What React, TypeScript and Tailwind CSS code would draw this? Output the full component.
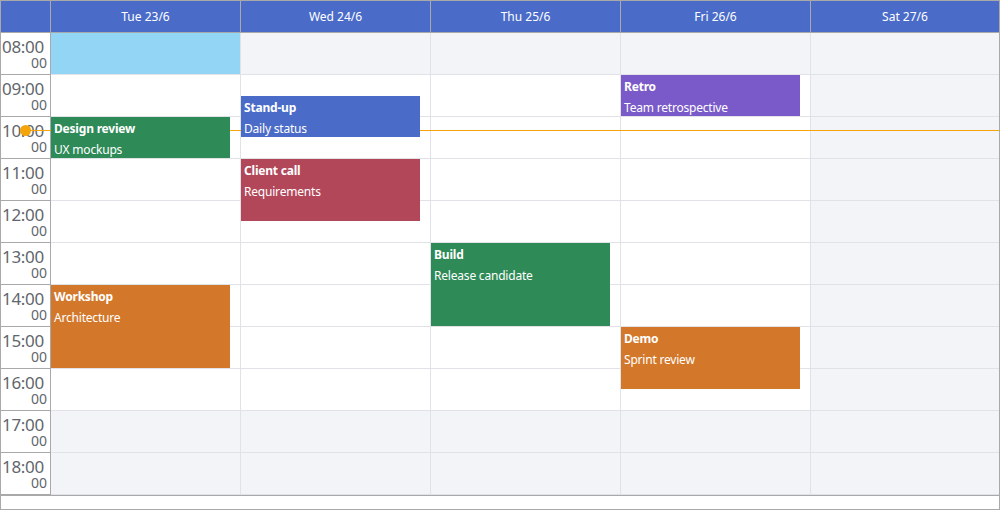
import React from 'react';

type Ev = { day: number; start: number; end: number; title?: string; note?: string; color: string; full?: boolean };

const days = ['Tue 23/6', 'Wed 24/6', 'Thu 25/6', 'Fri 26/6', 'Sat 27/6'];
const hours = [8, 9, 10, 11, 12, 13, 14, 15, 16, 17, 18];
const ROW = 42;

const events: Ev[] = [
    { day: 0, start: 8, end: 9, color: 'bg-[#93d5f5]', full: true },
    { day: 0, start: 10, end: 11, title: 'Design review', note: 'UX mockups', color: 'bg-[#2e8a57]' },
    { day: 0, start: 14, end: 16, title: 'Workshop', note: 'Architecture', color: 'bg-[#d3782b]' },
    { day: 1, start: 9.5, end: 10.5, title: 'Stand-up', note: 'Daily status', color: 'bg-[#4a6cc8]' },
    { day: 1, start: 11, end: 12.5, title: 'Client call', note: 'Requirements', color: 'bg-[#b2475a]' },
    { day: 2, start: 13, end: 15, title: 'Build', note: 'Release candidate', color: 'bg-[#2e8a57]' },
    { day: 3, start: 9, end: 10, title: 'Retro', note: 'Team retrospective', color: 'bg-[#7a5ac8]' },
    { day: 3, start: 15, end: 16.5, title: 'Demo', note: 'Sprint review', color: 'bg-[#d3782b]' },
];

// off hours and weekend get the grey cell
const isOff = (day: number, h: number) => day === 4 || h < 9 || h > 16;

function DayColumn({ index }: { index: number }) {
    const last = index === days.length - 1;
    return (
        <div className={last ? 'relative flex-1' : 'relative w-[190px] border-r border-[#e0e2e7]'}>
            {hours.map((h) => (
                <div key={h} className={`h-[42px] border-b border-[#e0e2e7] ${isOff(index, h) ? 'bg-[#f3f4f8]' : 'bg-white'}`} />
            ))}
            {events.filter((e) => e.day === index).map((e, i) => (
                <div
                    key={i}
                    className={`absolute left-0 z-20 px-[3px] pt-[1px] text-white text-[12px] leading-[21px] tracking-[-0.2px] ${e.color} ${e.full ? 'right-0' : 'right-[10px]'}`}
                    style={{ top: (e.start - 8) * ROW, height: (e.end - e.start) * ROW - 1 }}
                >
                    {e.title && <div className="font-bold">{e.title}</div>}
                    {e.note && <div>{e.note}</div>}
                </div>
            ))}
        </div>
    );
}

export default function App() {
    return (
        <div className="w-[1000px] h-[510px] flex flex-col border border-[#a9a9a9] bg-white overflow-hidden" style={{ fontFamily: '"Noto Sans", "Open Sans", sans-serif' }}>
            <header className="flex h-[32px] shrink-0 border-b border-[#a9a9a9] bg-[#4a6cc8] text-white text-[12px]">
                <div className="w-[50px] border-r border-[#a9a9a9]" />
                {days.map((d, i) => (
                    <div key={d} className={`flex items-center justify-center ${i === days.length - 1 ? 'flex-1' : 'w-[190px] border-r border-[#a9a9a9]'}`}>
                        {d}
                    </div>
                ))}
            </header>

            <div className="relative flex shrink-0">
                <div className="w-[50px] border-r border-[#a9a9a9] bg-white text-[#62666c]">
                    {hours.map((h) => (
                        <div key={h} className="h-[42px] border-b border-[#a9a9a9] pt-[5px] whitespace-nowrap">
                            <div className="pl-[1px] text-[17px] leading-[18px] tracking-[-0.3px]">{String(h).padStart(2, '0')}:00</div>
                            <div className="pr-[3px] text-right text-[14px] leading-[14px]">00</div>
                        </div>
                    ))}
                </div>
                {days.map((d, i) => (
                    <DayColumn key={d} index={i} />
                ))}

                {/* now indicator */}
                <div className="absolute left-[25px] right-0 top-[97px] z-10 h-px bg-[#f5a50a]" />
                <div className="absolute left-[19px] top-[92px] z-30 h-[11px] w-[11px] rounded-full bg-[#f5a50a]" />
            </div>

            <div className="flex-1 border-t border-[#a9a9a9] bg-white" />
        </div>
    );
}
